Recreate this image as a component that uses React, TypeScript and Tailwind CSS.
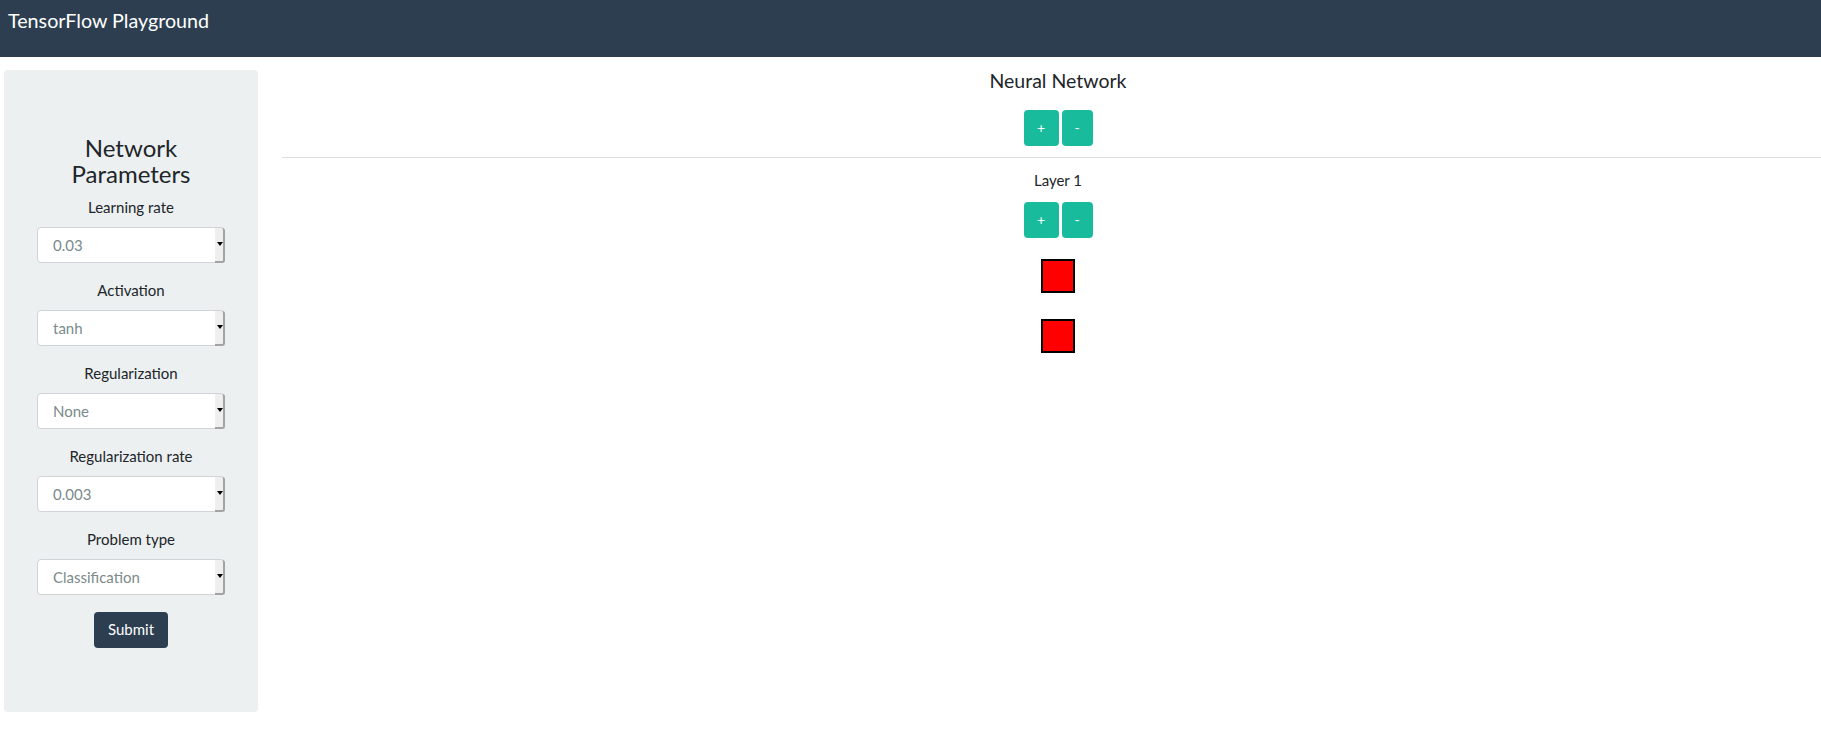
import React from "react";

const fields: { label: string; value: string }[] = [
  { label: "Learning rate", value: "0.03" },
  { label: "Activation", value: "tanh" },
  { label: "Regularization", value: "None" },
  { label: "Regularization rate", value: "0.003" },
  { label: "Problem type", value: "Classification" },
];

function FakeSelect({ value }: { value: string }) {
  return (
    <div className="relative h-[36px] w-[188px] rounded-[4px] border border-[#cfd4d9] bg-white text-left">
      <div className="pl-[15px] text-[15px] leading-[34px] text-[#7b8a8b]">{value}</div>
      <div className="absolute right-[-1px] top-[0px] bottom-[-1px] flex w-[10px] items-center justify-center rounded-r-[3px] border-r-2 border-b-2 border-[#a3a3a3] bg-[#efefef]">
        <svg width="6" height="4" viewBox="0 0 6 4" className="ml-[1px]">
          <path d="M0 0 H6 L3 4 Z" fill="#000" />
        </svg>
      </div>
    </div>
  );
}

function GreenButtons() {
  return (
    <div className="flex justify-center gap-[3px]">
      <button className="h-[36px] w-[35px] rounded-[4px] bg-[#18bc9c] text-[14px] leading-none text-white">
        +
      </button>
      <button className="h-[36px] w-[31px] rounded-[4px] bg-[#18bc9c] text-[14px] leading-none text-white">
        -
      </button>
    </div>
  );
}

export default function App() {
  return (
    <div className="min-h-[730px] w-full overflow-hidden bg-white font-['Lato','Noto_Sans',sans-serif] text-[#212529]">
      <header className="h-[57px] bg-[#2c3e50] pl-[8px] pt-[9px]">
        <span className="text-[19.7px] leading-[24px] text-white">TensorFlow Playground</span>
      </header>
      <div className="flex items-start">
        <aside className="ml-[4px] mt-[13px] w-[254px] shrink-0 rounded-[4px] bg-[#ecf0f1] pt-[65px] pb-[64px]">
          <div className="mx-auto flex w-[188px] flex-col items-center text-center">
            <h3 className="mb-[9px] text-[24px] leading-[26.4px] font-normal">Network Parameters</h3>
            {fields.map((f, i) => (
              <div key={f.label} className={i === 0 ? "flex flex-col items-center" : "mt-[17px] flex flex-col items-center"}>
                <div className="mb-[9px] text-[15px] leading-[21px]">{f.label}</div>
                <FakeSelect value={f.value} />
              </div>
            ))}
            <button className="mt-[17px] h-[36px] rounded-[4px] bg-[#2c3e50] px-[13.5px] text-[15px] leading-none text-white">
              Submit
            </button>
          </div>
        </aside>
        <main className="ml-[24px] w-[1552px] shrink-0 pt-[13px]">
          <div className="text-center text-[19.5px] leading-[22px]">Neural Network</div>
          <div className="mt-[18px]">
            <GreenButtons />
          </div>
          <div className="mt-[10.5px] h-px bg-[#dddddd]" />
          <div className="mt-[12.5px] flex flex-col items-center">
            <div className="text-[15px] leading-[21px]">Layer 1</div>
            <div className="mt-[11px]">
              <GreenButtons />
            </div>
            <div className="mt-[20.5px] flex flex-col items-center gap-[26px]">
              <div className="h-[34px] w-[34px] border-2 border-black bg-[#ff0000]" />
              <div className="h-[34px] w-[34px] border-2 border-black bg-[#ff0000]" />
            </div>
          </div>
        </main>
      </div>
    </div>
  );
}
